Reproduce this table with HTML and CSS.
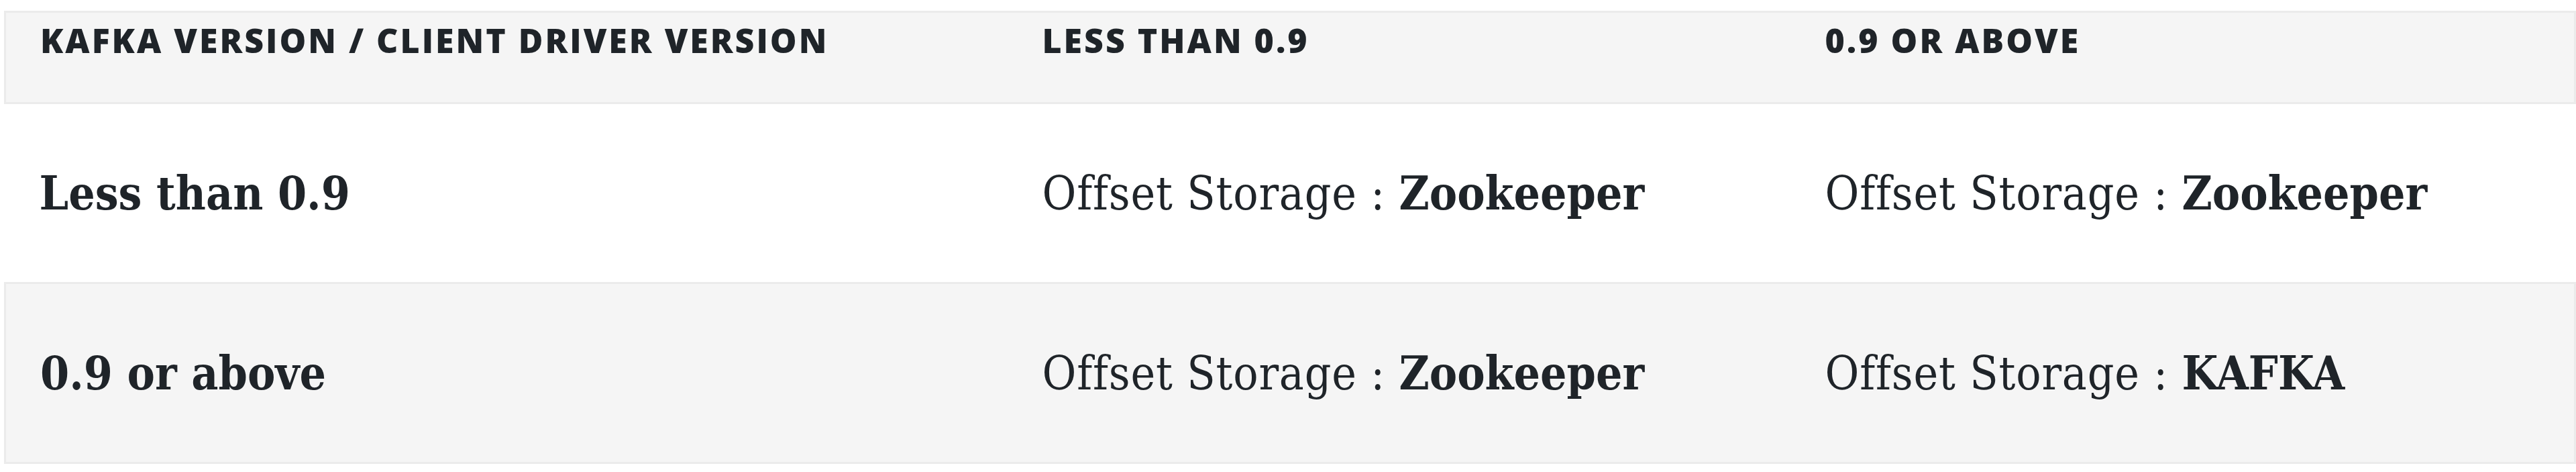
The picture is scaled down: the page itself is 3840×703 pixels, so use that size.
FILE: index.html
```html
<!DOCTYPE html>
<html lang="en">
<head>
<meta charset="utf-8">
<title>Kafka offset storage</title>
<link rel="stylesheet" href="styles.css">
</head>
<body>
<table class="matrix">
  <colgroup>
    <col class="c1">
    <col class="c2">
    <col class="c3">
  </colgroup>
  <thead>
    <tr class="head-row">
      <th>Kafka Version / Client Driver Version</th>
      <th>Less than 0.9</th>
      <th>0.9 or above</th>
    </tr>
  </thead>
  <tbody>
    <tr class="row">
      <td class="label">Less than 0.9</td>
      <td>Offset Storage : <strong>Zookeeper</strong></td>
      <td>Offset Storage : <strong>Zookeeper</strong></td>
    </tr>
    <tr class="row alt">
      <td class="label">0.9 or above</td>
      <td>Offset Storage : <strong>Zookeeper</strong></td>
      <td>Offset Storage : <strong>KAFKA</strong></td>
    </tr>
  </tbody>
</table>
</body>
</html>
```
FILE: styles.css
```css
html, body {
  margin: 0;
  background: #ffffff;
}
body {
  padding: 16px 3px 0 6px;
  color: #1f2429;
}
.matrix {
  width: 3831px;
  border-collapse: collapse;
  table-layout: fixed;
}
.c1 { width: 1495px; }
.c2 { width: 1167px; }
.c3 { width: 1169px; }

.head-row {
  background: #f5f5f5;
  border: 3px solid #ebebeb;
}
.head-row th {
  text-align: left;
  vertical-align: top;
  font-family: "Open Sans", "Liberation Sans", sans-serif;
  font-weight: 800;
  font-size: 50px;
  line-height: 60px;
  letter-spacing: 3px;
  text-transform: uppercase;
  padding: 11px 51px 62px 51px;
  white-space: nowrap;
}
.row td {
  height: 268px;
  box-sizing: border-box;
  padding: 0 51px 0 51px;
  vertical-align: middle;
  font-family: "DejaVu Serif", "Liberation Serif", serif;
  font-stretch: condensed;
  font-size: 69px;
  font-weight: 400;
  letter-spacing: 0.8px;
  white-space: nowrap;
}
.row td strong,
.row td.label {
  font-weight: 700;
  letter-spacing: 0;
}
.row.alt {
  background: #f5f5f5;
  border: 3px solid #ebebeb;
}
```
